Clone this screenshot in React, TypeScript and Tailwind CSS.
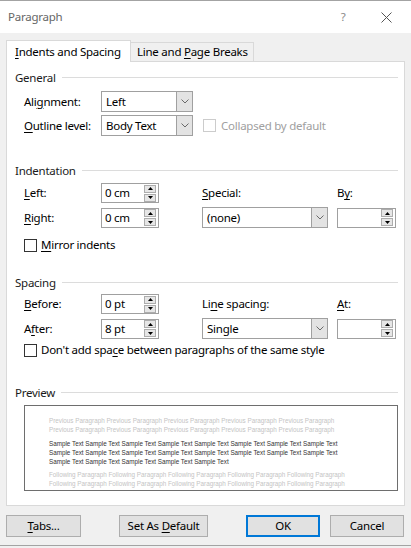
import React from "react";

const U: React.FC<{ children: React.ReactNode }> = ({ children }) => (
    <span className="underline underline-offset-[2px] decoration-[1px]">{children}</span>
);

const Chevron = () => (
    <svg width="8" height="5" viewBox="0 0 8 5">
        <path d="M0.5 0.5L4 4L7.5 0.5" stroke="#6a6a6a" fill="none" />
    </svg>
);

const Select: React.FC<{ value: string; width: string }> = ({ value, width }) => (
    <div className={`${width} h-[21px] flex border border-[#a0a0a0] bg-white`}>
        <div className="flex-1 flex items-center pl-[4px]">{value}</div>
        <div className="w-[16px] bg-[#e3e3e3] border-l border-[#a0a0a0] flex items-center justify-center">
            <Chevron />
        </div>
    </div>
);

const SpinArrow = ({ up }: { up: boolean }) => (
    <div className="w-[12px] h-[8px] bg-[#e6e6e6] border border-[#adadad] flex items-center justify-center">
        <svg width="5" height="3" viewBox="0 0 5 3">
            <path d={up ? "M2.5 0L5 3H0z" : "M0 0H5L2.5 3z"} fill="#000" />
        </svg>
    </div>
);

const Spinner: React.FC<{ value?: string; width: string }> = ({ value, width }) => (
    <div className={`${width} h-[20px] flex items-center border border-[#a0a0a0] bg-white`}>
        <div className="flex-1 pl-[3px]">{value}</div>
        <div className="flex flex-col gap-[1px] mr-[2px]">
            <SpinArrow up />
            <SpinArrow up={false} />
        </div>
    </div>
);

const SectionHeader: React.FC<{ title: string; mt: string }> = ({ title, mt }) => (
    <div className={`${mt} h-[16px] flex items-center gap-[6px] text-[#1a1a1a]`}>
        <span className="pt-px">{title}</span>
        <div className="flex-1 h-px bg-[#dcdcdc]" />
    </div>
);

const Checkbox = ({ disabled }: { disabled?: boolean }) => (
    <div
        className={`w-[13px] h-[13px] border bg-white ${
            disabled ? "border-[#cccccc]" : "border-[#333333]"
        }`}
    />
);

const Btn: React.FC<{ children: React.ReactNode; width: string; primary?: boolean; ml?: string }> = ({
    children,
    width,
    primary,
    ml,
}) => (
    <div
        className={`${width} ${ml ?? ""} h-[22px] flex items-center justify-center bg-[#e1e1e1] ${
            primary ? "border-2 border-[#0078d7]" : "border border-[#adadad]"
        }`}
    >
        <span>{children}</span>
    </div>
);

const rep = (s: string, n: number) => Array(n).fill(s).join(" ");

export default function App() {
    return (
        <div className="w-[411px] h-[548px] bg-[#f0f0f0] border-t border-[#a3a3a3] font-['Noto_Sans',sans-serif] text-[11.5px] tracking-[-0.25px] text-black overflow-hidden">
            {/* title bar */}
            <div className="h-[32px] bg-white flex items-center pl-[8px] text-[#666666]">
                <span className="flex-1">Paragraph</span>
                <span className="w-[14px] text-center mr-[31px] text-[#888888]">?</span>
                <svg width="11" height="11" viewBox="0 0 11 11" className="mr-[19px]">
                    <path d="M0.5 0.5L10.5 10.5M10.5 0.5L0.5 10.5" stroke="#555555" strokeWidth="1" />
                </svg>
            </div>

            <div className="px-[6px] pt-[7px]">
                {/* tabs */}
                <div className="flex items-end h-[21px]">
                    <div className="relative z-10 -mb-px w-[125px] h-[22px] bg-white border border-b-0 border-[#d9d9d9] flex items-center pl-[8px] whitespace-nowrap">
                        <span>
                            <U>I</U>ndents and Spacing
                        </span>
                    </div>
                    <div className="w-[123px] h-[19px] bg-[#f0f0f0] border border-b-0 border-l-0 border-[#d9d9d9] flex items-center pl-[6px] whitespace-nowrap">
                        <span>
                            Line and <U>P</U>age Breaks
                        </span>
                    </div>
                </div>

                {/* panel */}
                <div className="h-[445px] bg-white border border-[#d9d9d9] pl-[8px] pr-[6px]">
                    <SectionHeader title="General" mt="mt-[7px]" />
                    <div className="mt-[6px] ml-[9px] flex items-center h-[21px]">
                        <span className="w-[77px]">
                            Ali<U>g</U>nment:
                        </span>
                        <Select value="Left" width="w-[92px]" />
                    </div>
                    <div className="mt-[3px] ml-[9px] flex items-center h-[21px]">
                        <span className="w-[77px]">
                            <U>O</U>utline level:
                        </span>
                        <Select value="Body Text" width="w-[92px]" />
                        <div className="ml-[10px] flex items-center gap-[5px] text-[#a0a0a0]">
                            <Checkbox disabled />
                            <span>Collapsed by default</span>
                        </div>
                    </div>

                    <SectionHeader title="Indentation" mt="mt-[26px]" />
                    <div className="mt-[5px] ml-[9px] grid grid-cols-[77px_101px_135px_60px] items-center h-[20px]">
                        <span>
                            <U>L</U>eft:
                        </span>
                        <Spinner value="0 cm" width="w-[58px]" />
                        <span>
                            <U>S</U>pecial:
                        </span>
                        <span>
                            B<U>y</U>:
                        </span>
                    </div>
                    <div className="mt-[4px] ml-[9px] grid grid-cols-[77px_101px_135px_60px] items-center h-[21px]">
                        <span>
                            <U>R</U>ight:
                        </span>
                        <Spinner value="0 cm" width="w-[58px]" />
                        <Select value="(none)" width="w-[126px]" />
                        <Spinner width="w-[59px]" />
                    </div>
                    <div className="mt-[9px] ml-[9px] h-[16px] flex items-center gap-[4px]">
                        <Checkbox />
                        <span>
                            <U>M</U>irror indents
                        </span>
                    </div>

                    <SectionHeader title="Spacing" mt="mt-[21px]" />
                    <div className="mt-[4px] ml-[9px] grid grid-cols-[77px_101px_135px_60px] items-center h-[20px]">
                        <span>
                            <U>B</U>efore:
                        </span>
                        <Spinner value="0 pt" width="w-[58px]" />
                        <span>
                            Li<U>n</U>e spacing:
                        </span>
                        <span>
                            <U>A</U>t:
                        </span>
                    </div>
                    <div className="mt-[4px] ml-[9px] grid grid-cols-[77px_101px_135px_60px] items-center h-[21px]">
                        <span>
                            A<U>f</U>ter:
                        </span>
                        <Spinner value="8 pt" width="w-[58px]" />
                        <Select value="Single" width="w-[126px]" />
                        <Spinner width="w-[59px]" />
                    </div>
                    <div className="mt-[3px] ml-[9px] h-[16px] flex items-center gap-[4px]">
                        <Checkbox />
                        <span>
                            Don't add spa<U>c</U>e between paragraphs of the same style
                        </span>
                    </div>

                    <SectionHeader title="Preview" mt="mt-[26px]" />
                    <div className="mt-[5px] ml-[9px] h-[86px] border border-[#6e6e6e] overflow-hidden pl-[24px] pt-[10px] text-[6.3px] leading-[9px] tracking-normal whitespace-nowrap font-['Liberation_Sans',sans-serif]">
                        <div className="text-[#c4c4c4]">
                            <div>{rep("Previous Paragraph", 5)}</div>
                            <div>{rep("Previous Paragraph", 5)}</div>
                        </div>
                        <div className="mt-[5px] text-[#333333]">
                            <div>{rep("Sample Text", 8)}</div>
                            <div>{rep("Sample Text", 8)}</div>
                            <div>{rep("Sample Text", 5)}</div>
                        </div>
                        <div className="mt-[4px] text-[#c4c4c4]">
                            <div>{rep("Following Paragraph", 5)}</div>
                            <div>{rep("Following Paragraph", 5)}</div>
                            <div>{rep("Following Paragraph", 5)}</div>
                        </div>
                    </div>
                </div>

                {/* buttons */}
                <div className="mt-[9px] flex items-center">
                    <Btn width="w-[75px]">
                        <U>T</U>abs...
                    </Btn>
                    <Btn width="w-[89px]" ml="ml-[38px]">
                        Set As <U>D</U>efault
                    </Btn>
                    <Btn width="w-[74px]" ml="ml-[38px]" primary>
                        OK
                    </Btn>
                    <Btn width="w-[74px]" ml="ml-[10px]">
                        Cancel
                    </Btn>
                </div>
            </div>
            <div className="mt-[8px] h-px bg-[#a3a3a3]" />
        </div>
    );
}
